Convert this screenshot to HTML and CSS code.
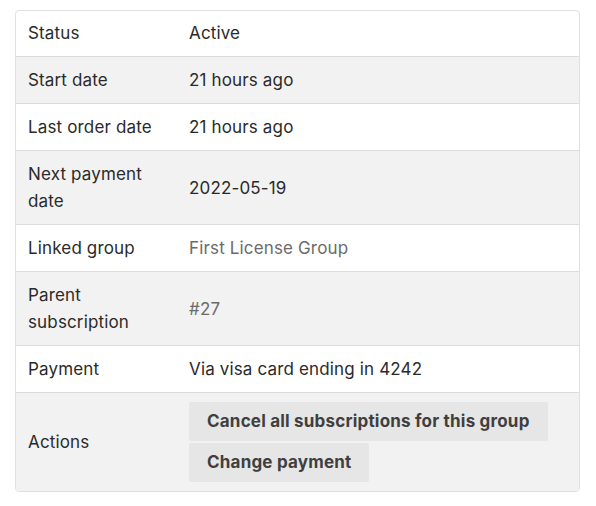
FILE: index.html
```html
<!DOCTYPE html>
<html lang="en">
<head>
    <meta charset="UTF-8">
    <meta name="viewport" content="width=device-width, initial-scale=1.0">
    <title>Subscription</title>
    <link rel="stylesheet" href="styles.css">
</head>
<body>
    <table class="details">
        <tbody>
            <tr>
                <td class="label">Status</td>
                <td>Active</td>
            </tr>
            <tr>
                <td class="label">Start date</td>
                <td>21 hours ago</td>
            </tr>
            <tr>
                <td class="label">Last order date</td>
                <td>21 hours ago</td>
            </tr>
            <tr>
                <td class="label">Next payment date</td>
                <td>2022-05-19</td>
            </tr>
            <tr>
                <td class="label">Linked group</td>
                <td><a href="#">First License Group</a></td>
            </tr>
            <tr>
                <td class="label">Parent subscription</td>
                <td><a href="#">#27</a></td>
            </tr>
            <tr>
                <td class="label">Payment</td>
                <td>Via visa card ending in 4242</td>
            </tr>
            <tr>
                <td class="label">Actions</td>
                <td class="actions">
                    <a href="#" class="button">Cancel all subscriptions for this group</a>
                    <a href="#" class="button">Change payment</a>
                </td>
            </tr>
        </tbody>
    </table>
</body>
</html>
```

FILE: styles.css
```css
body {
    font-family: Inter, "Liberation Sans", sans-serif;
    background-color: #ffffff;
    color: #2a2a2a;
    margin: 0;
    padding: 10px 16px 0 15px;
}

.details {
    width: 100%;
    border-collapse: separate;
    border-spacing: 0;
    border: 1px solid #e0e0e0;
    border-radius: 4px;
    overflow: hidden;
    font-size: 17px;
    line-height: 27px;
    letter-spacing: 0.15px;
}

.details td {
    padding: 10px 12px 9px;
    border-top: 1px solid #dcdcdc;
    vertical-align: middle;
    text-align: left;
}

.details tr:first-child td {
    border-top: none;
    padding-top: 9px;
}

.details tr:nth-child(even) td {
    background-color: #f2f2f2;
}

.details .label {
    width: 137px;
}

.details a {
    color: #6b6b6b;
    text-decoration: none;
}

.details td.actions {
    display: flex;
    flex-direction: column;
    align-items: flex-start;
    gap: 2px;
    padding-top: 9px;
}

.details .button {
    display: inline-block;
    background-color: #e6e6e6;
    color: #3f3f3f;
    font-weight: 700;
    letter-spacing: 0.2px;
    padding: 6px 18px;
    border-radius: 2px;
}
```
